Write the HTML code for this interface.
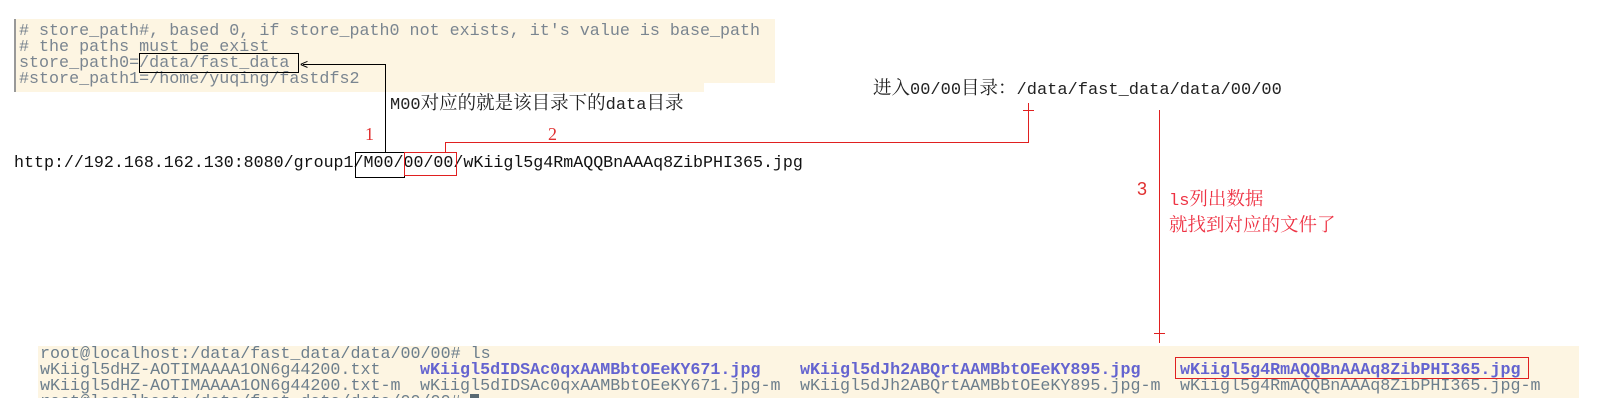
<!DOCTYPE html>
<html><head><meta charset="utf-8"><style>
body{margin:0;width:1608px;height:411px;background:#fff;position:relative;overflow:hidden;font-family:"Liberation Mono",monospace}
.a{position:absolute;white-space:pre}
.cfg{position:absolute;left:14px;top:19px;width:759px;height:64px;background:#fdf5e2;border-left:2px solid #999}
.cfg2{position:absolute;left:14px;top:83px;width:688px;height:9px;background:#fdf5e2;border-left:2px solid #999}
.cl{position:absolute;left:19px;font-size:16.7px;line-height:16px;color:#7a8590;white-space:pre}
.term{position:absolute;left:38px;top:346px;width:1541px;height:52px;background:#fdf5e2;overflow:hidden}
.tl{position:absolute;font-size:16.7px;line-height:16px;color:#6c7e8c;white-space:pre}
.b{color:#6464d0;font-weight:bold}
.r{background:#e02020;position:absolute}
.k{background:#000;position:absolute}
.cn{font-family:"Liberation Mono","Noto Serif CJK SC",monospace;color:#222}
</style></head><body>
<div class="cfg"></div><div class="cfg2"></div>
<div class="cl" style="top:24px"># store_path#, based 0, if store_path0 not exists, it's value is base_path</div>
<div class="cl" style="top:40px"># the paths must be exist</div>
<div class="cl" style="top:56px">store_path0=/data/fast_data</div>
<div class="cl" style="top:72px">#store_path1=/home/yuqing/fastdfs2</div>
<div style="position:absolute;left:139px;top:53px;width:158px;height:18px;border:1px solid #000"></div>
<div class="k" style="left:303px;top:64px;width:82px;height:1px"></div>
<div class="k" style="left:385px;top:64px;width:1px;height:88px"></div>
<div class="a" style="left:300px;top:56px;font-size:14px;line-height:16px;font-family:'Liberation Sans',sans-serif">&lt;</div>
<div class="a cn" style="left:390px;top:94px;font-size:17px;line-height:22px">M00<span style="font-size:18.5px">对应的就是该目录下的</span>data<span style="font-size:18.5px">目录</span></div>
<div class="a cn" style="left:873px;top:79px;font-size:17px;line-height:22px"><span style="font-size:18.5px">进入</span>00/00<span style="font-size:18.5px">目录：</span>/data/fast_data/data/00/00</div>
<div class="a" style="left:14px;top:153px;font-size:16.65px;line-height:20px;color:#111">http://192.168.162.130:8080/group1/M00/00/00/wKiigl5g4RmAQQBnAAAq8ZibPHI365.jpg</div>
<div style="position:absolute;left:355px;top:152px;width:48px;height:24px;border:1px solid #000"></div>
<div style="position:absolute;left:404px;top:152px;width:51px;height:22px;border:1px solid #e02020"></div>
<div class="a" style="left:365px;top:124px;font-size:18px;color:#e03030;font-family:'Liberation Serif',serif">1</div>
<div class="a" style="left:548px;top:124px;font-size:18px;color:#e03030;font-family:'Liberation Serif',serif">2</div>
<div class="r" style="left:445px;top:142px;width:1px;height:10px"></div>
<div class="r" style="left:445px;top:142px;width:584px;height:1px"></div>
<div class="r" style="left:1028px;top:103px;width:1px;height:40px"></div>
<div class="r" style="left:1023px;top:110px;width:11px;height:1px"></div>
<div class="r" style="left:1159px;top:110px;width:1px;height:233px"></div>
<div class="r" style="left:1154px;top:333px;width:11px;height:1px"></div>
<div class="a" style="left:1137px;top:179px;font-size:18px;color:#e03030;font-family:'Liberation Sans',sans-serif">3</div>
<div class="a" style="left:1169px;top:188px;font-size:17px;line-height:25px;color:#ee3344;font-family:'Liberation Mono','Noto Serif CJK SC',monospace">ls<span style="font-size:18.5px">列出数据</span>
<span style="font-size:18.5px">就找到对应的文件了</span></div>
<div class="term">
<div class="tl" style="left:2px;top:1px">root@localhost:/data/fast_data/data/00/00# ls</div>
<div class="tl" style="left:2px;top:17px">wKiigl5dHZ-AOTIMAAAA1ON6g44200.txt</div>
<div class="tl" style="left:2px;top:33px">wKiigl5dHZ-AOTIMAAAA1ON6g44200.txt-m</div>
<div class="tl" style="left:2px;top:49px">root@localhost:/data/fast_data/data/00/00# </div>
<div class="tl b" style="left:382px;top:17px">wKiigl5dIDSAc0qxAAMBbtOEeKY671.jpg</div>
<div class="tl" style="left:382px;top:33px">wKiigl5dIDSAc0qxAAMBbtOEeKY671.jpg-m</div>
<div class="tl b" style="left:762px;top:17px">wKiigl5dJh2ABQrtAAMBbtOEeKY895.jpg</div>
<div class="tl" style="left:762px;top:33px">wKiigl5dJh2ABQrtAAMBbtOEeKY895.jpg-m</div>
<div class="tl b" style="left:1142px;top:17px">wKiigl5g4RmAQQBnAAAq8ZibPHI365.jpg</div>
<div class="tl" style="left:1142px;top:33px">wKiigl5g4RmAQQBnAAAq8ZibPHI365.jpg-m</div>
<div style="position:absolute;left:432px;top:48px;width:9px;height:6px;background:#5a6a72"></div>
</div>
<div style="position:absolute;left:1175px;top:357px;width:352px;height:20px;border:1px solid #e02020"></div>
</body></html>
